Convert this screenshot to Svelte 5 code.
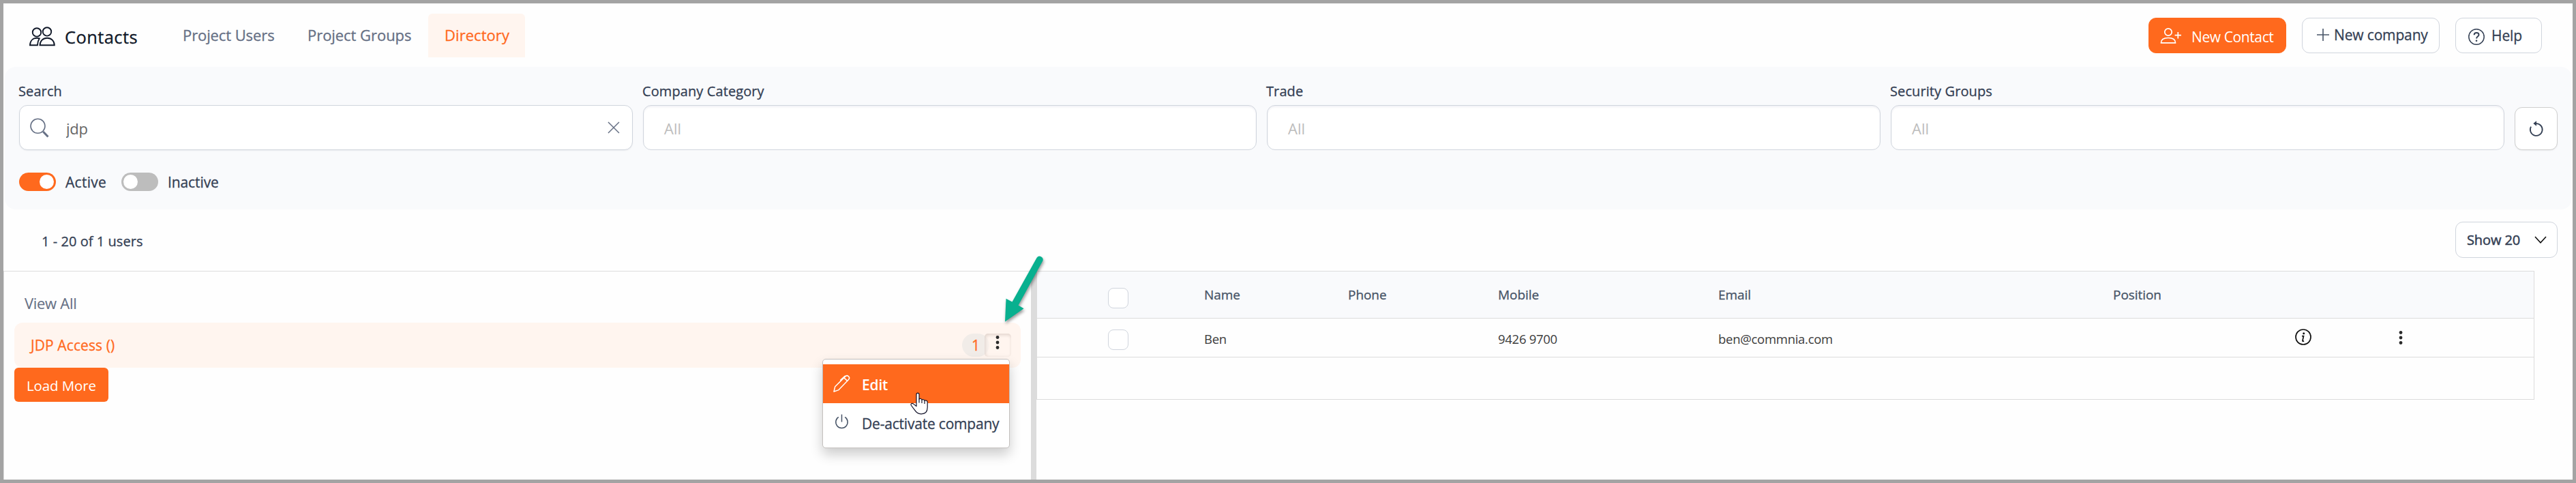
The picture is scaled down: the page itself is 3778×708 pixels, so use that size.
<script>
  const tabs = ['Project Users', 'Project Groups', 'Directory'];
  const filters = ['Company Category', 'Trade', 'Security Groups'];
  const columns = ['Name', 'Phone', 'Mobile', 'Email', 'Position'];
  const users = [{ name: 'Ben', phone: '', mobile: '9426 9700', email: 'ben@commnia.com', position: '' }];
  let activeTab = $state('Directory');
  let query = $state('jdp');
</script>

{#snippet dots()}
  <svg class="dots" width="6" height="22" viewBox="0 0 6 22" fill="#2b2b2b">
    <circle cx="3" cy="3.5" r="2.4" /><circle cx="3" cy="11" r="2.4" /><circle cx="3" cy="18.5" r="2.4" />
  </svg>
{/snippet}

<div class="page">
  <header>
    <svg class="people" width="38" height="30" viewBox="0 0 38 30" fill="none" stroke="#101828" stroke-width="1.9">
      <circle cx="11" cy="8.4" r="6.2" /><circle cx="26" cy="7.4" r="6.2" />
      <path d="M14.800 17.300c-1.200-.3-2.400-.5-3.600-.5-6 0-10 4-10.200 10.400h10.900c.3-3.900 1.300-7.400 2.900-9.900z" />
      <path d="M15.500 27.200c.3-6.300 4.500-10.400 10.700-10.400s10.400 4.100 10.600 10.400z" />
    </svg>
    <h1>Contacts</h1>
    <nav>
      {#each tabs as tab}
        <button class="tab" class:on={tab === activeTab} onclick={() => (activeTab = tab)}>{tab}</button>
      {/each}
    </nav>
    <div class="actions">
      <button class="btn primary">
        <svg width="32" height="26" viewBox="0 0 32 26" fill="none" stroke="#fff" stroke-width="1.7">
          <circle cx="12" cy="7" r="5.200" /><path d="M1.400 22.900c0-5 4.200-7.400 10.600-7.400s10.600 2.400 10.600 7.400z" stroke-linejoin="round" /><path d="M26.300 7v9.400M21.600 11.700H31" />
        </svg>
        <span>New Contact</span>
      </button>
      <button class="btn company">
        <svg width="18" height="18" viewBox="0 0 18 18" stroke="#475467" stroke-width="1.600"><path d="M9 0v18M0 9h18" /></svg>
        <span>New company</span>
      </button>
      <button class="btn help">
        <svg width="24" height="24" viewBox="0 0 24 24" fill="none" stroke="#344054" stroke-width="1.500">
          <circle cx="12" cy="12" r="11.200" /><path d="M8.600 9.200c.1-2 1.500-3.200 3.500-3.200s3.400 1.200 3.400 2.900c0 2.700-3.400 2.700-3.400 5.600" stroke-width="2" /><circle cx="12" cy="17.800" r="1.300" fill="#344054" stroke="none" />
        </svg>
        <span>Help</span>
      </button>
    </div>
  </header>

  <section class="filters">
    <div class="fields">
      <div class="field">
        <label for="search">Search</label>
        <div class="box search">
          <svg width="28" height="29" viewBox="0 0 28 29" fill="none" stroke="#667085"><circle cx="11.500" cy="11.800" r="10.500" stroke-width="1.600" /><path d="M19.300 20l7.200 7.500" stroke-width="3" /></svg>
          <input id="search" bind:value={query} />
          <svg width="18" height="18" viewBox="0 0 18 18" stroke="#667085" stroke-width="1.500"><path d="M1 1l16 16M17 1L1 17" /></svg>
        </div>
      </div>
      {#each filters as name}
        <div class="field">
          <span class="label">{name}</span>
          <div class="box select">All</div>
        </div>
      {/each}
      <button class="reset" aria-label="Reset">
        <svg width="20" height="23" viewBox="0 0 20 23" fill="none" stroke="#344054" stroke-width="1.800"><path d="M2 8.600A8.900 8.900 0 1 0 10 4.100" /><path d="M10 .2v7.600L5.300 4z" fill="#344054" stroke="none" /></svg>
      </button>
    </div>
    <div class="toggles">
      <span class="switch on"></span><span class="tl">Active</span>
      <span class="switch"></span><span class="tl second">Inactive</span>
    </div>
  </section>

  <div class="toolbar">
    <span class="count">1 - 20 of 1 users</span>
    <button class="show"><span>Show 20</span>
      <svg width="18" height="11" viewBox="0 0 18 11" fill="none" stroke="#101010" stroke-width="1.600"><path d="M1 1l8 8.700L17 1" /></svg>
    </button>
  </div>

  <div class="body">
    <aside>
      <div class="viewall">View All</div>
      <div class="company-row">
        <span class="cname">JDP Access ()</span>
        <span class="badge">1</span>
        <button class="more" aria-label="More">{@render dots()}</button>
        <div class="menu">
          <div class="item edit">
            <svg width="25" height="25" viewBox="0 0 25 25" fill="none" stroke="#fff" stroke-width="1.500" stroke-linejoin="round"><path d="M1 24l1.700-7.200L18 1.600c1.300-1.200 3.200-1 4.500.2s1.300 3.200.2 4.400L8 21.600z" /><path d="M15.700 3.600l5.300 5M10.300 7.600L16 2.200c.7-.7 1.500-1 2.500-.8" /></svg>
            <span>Edit</span>
          </div>
          <div class="item">
            <svg width="25" height="25" viewBox="0 0 25 25" fill="none" stroke="#475467" stroke-width="1.500"><path d="M12.500 0.500v11M7.800 4.400a8.700 8.700 0 1 0 9.400 0" /></svg>
            <span>De-activate company</span>
          </div>
        </div>
      </div>
      <button class="load">Load More</button>
    </aside>
    <div class="splitter"></div>
    <div class="table">
      <div class="row head">
        <i class="check"></i>
        {#each columns as c}<span>{c}</span>{/each}
      </div>
      {#each users as u}
        <div class="row">
          <i class="check"></i>
          <span>{u.name}</span><span>{u.phone}</span><span>{u.mobile}</span><span>{u.email}</span><span>{u.position}</span>
          <svg class="info" width="24" height="24" viewBox="0 0 24 24" fill="none" stroke="#111" stroke-width="1.700"><circle cx="12" cy="12" r="11" /><circle cx="12.700" cy="6.700" r="1.500" fill="#111" stroke="none" /><path d="M10 10.600h2.500l-1.500 6.700c-.2 1 .6 1.300 2 .4" /></svg>
          {@render dots()}
        </div>
      {/each}
      <div class="row blank"></div>
    </div>
  </div>

  <svg class="cursor" width="28" height="34" viewBox="0 0 28 34" fill="#fff" stroke="#14142b" stroke-width="1.200" stroke-linejoin="round">
    <path d="M9 20.500V3.200C9 .3 13 .3 13 3.200V10c1.200-1 3.600-.6 4 1 1.400-.8 3.500-.3 4 1.200 1.900-.7 4.200.2 4.200 2.300v7.500c0 6-3 9.800-9.200 9.800-5 0-7.500-2.600-9.800-6.200L1.200 19c-.9-1.800 1-3.200 2.800-2.400z" />
    <path d="M13 9.500v6M17 11v5M21 12.200V17" fill="none" />
  </svg>
  <svg class="arrow" width="70" height="110" viewBox="0 0 70 110" fill="#08b08f">
    <path d="M50.600 7.800a5 5 0 0 1 8.800 4.500L23.500 77.400l8 4.800L4 101.500 5.500 67.800l9 4.700z" />
  </svg>
</div>

<style>
  :global(body) { background: #fefefe; }
  .page, .page * { box-sizing: border-box; }
  .page { position: relative; width: 3778px; height: 708px; border: 5px solid #a3a3a3; background: #fefefe; font-family: "Open Sans", "Noto Sans", sans-serif; font-weight: 500; -webkit-text-stroke: .3px currentColor; color: #344054; display: flex; flex-direction: column; white-space: nowrap; overflow: hidden; }
  svg { display: block; flex: none; overflow: visible; }
  button { font: inherit; color: inherit; border: 0; background: none; padding: 0; margin: 0; }
  header { height: 93px; flex: none; display: flex; align-items: center; padding: 0 45px 0 38px; }
  header > .people { margin-top: 4px; }
  h1 { margin: 4px 0 0 14px; font-size: 25.500px; font-weight: 500; line-height: 30px; letter-spacing: .4px; color: #101828; width: 148px; }
  nav { display: flex; }
  .tab { height: 64px; padding: 0 25px; font-size: 22px; line-height: 63px; color: #667085; letter-spacing: -.1px; border-radius: 6px 6px 0 0; width: 184px; text-align: left; }
  .tab:nth-child(2) { width: 201px; padding-left: 24px; letter-spacing: -.05px; }
  .tab.on { background: #fff5ef; color: #ff691d; width: 142px; padding: 0 0 0 1px; text-align: center; letter-spacing: .05px; }
  .actions { margin-left: auto; display: flex; gap: 23px; }
  .btn { height: 52px; width: 202px; border: 1px solid #d0d5dd; border-radius: 11px; background: #fff; display: flex; align-items: center; font-size: 21px; line-height: 30px; }
  .primary { background: #ff691d; border-color: #ff691d; color: #fff; padding-left: 16px; gap: 14px; letter-spacing: -.4px; -webkit-text-stroke: 0; }
  .primary span { margin-top: 4px; }
  .primary svg { margin-top: 3px; }
  .company { padding-left: 21px; gap: 7px; letter-spacing: -.15px; }
  .company span { margin-top: -2px; }
  .company svg { margin-top: -2px; }
  .help { width: 127px; padding-left: 18px; gap: 10px; letter-spacing: -.1px; }
  .help svg { margin-top: 4px; }

  .filters { height: 209px; flex: none; margin: 0 1px 0 2px; border-radius: 16px; background: #f9fafc; padding: 24px 0 0 21px; }
  .fields { display: flex; gap: 15px; align-items: flex-end; }
  .field { width: 900px; display: flex; flex-direction: column; gap: 8px; }
  .field label, .label { font-size: 20px; line-height: 24px; letter-spacing: .1px; margin-left: -1px; }
  .box { height: 66px; border: 1px solid #d0d5dd; border-radius: 12px; background: #fff; display: flex; align-items: center; font-size: 22px; font-weight: 400; -webkit-text-stroke: 0; }
  .search { padding: 0 18px 0 15px; box-shadow: 0 1px 2px rgba(16, 24, 40, .06); }
  .search input { flex: 1; border: 0; outline: 0; background: none; font: inherit; color: #666; padding: 2px 0 0 25px; height: 42px; letter-spacing: -.3px; }
  .select { padding-left: 30px; padding-top: 1px; color: #bdbdbd; box-shadow: inset 0 2px 3px rgba(16, 24, 80, .06); }
  .reset { width: 63px; height: 63px; border: 1px solid #cfcfcf; border-radius: 11px; background: #fff; display: flex; align-items: center; justify-content: center; box-shadow: 0 1px 2px rgba(0, 0, 0, .06); }
  .toggles { display: flex; align-items: center; margin-top: 33px; height: 27px; font-size: 21px; line-height: 27px; }
  .switch { width: 54px; height: 27px; border-radius: 14px; background: #bdbdbd; padding: 3px; display: flex; }
  .switch::after { content: ""; width: 21px; height: 21px; border-radius: 50%; background: #fff; }
  .switch.on { background: #ff691d; justify-content: flex-end; }
  .tl { width: 82px; margin: 2px 0 0 14px; letter-spacing: .3px; }
  .second { letter-spacing: -.1px; }

  .toolbar { height: 90px; flex: none; display: flex; align-items: center; justify-content: space-between; padding: 0 22px 0 56px; }
  .count { font-size: 20px; line-height: 28px; margin-top: 3px; letter-spacing: .05px; }
  .show { width: 150px; height: 53px; margin-top: -1px; border: 1px solid #d0d5dd; border-radius: 11px; background: #fff; display: flex; align-items: center; justify-content: space-between; padding: 0 15px 0 16px; font-size: 20px; letter-spacing: -.1px; -webkit-text-stroke: .5px currentColor; }

  .body { flex: 1; display: flex; margin-right: 56px; border-top: 1px solid #dcdcdc; }
  aside { width: 1507px; border-left: 1px solid #dcdcdc; padding: 22px 15px 0 15px; }
  .viewall { height: 53px; line-height: 48px; padding-left: 15px; font-size: 22px; color: #667085; letter-spacing: -.3px; -webkit-text-stroke: .1px currentColor; }
  .company-row { position: relative; height: 66px; border-radius: 12px; background: #fff5ef; display: flex; align-items: center; padding: 0 14px 0 24px; color: #ff691d; font-size: 21px; }
  .cname { flex: 1; margin-top: -1px; letter-spacing: .1px; }
  .badge { width: 40px; height: 34px; border-radius: 17px; background: #f1ece8; font-size: 21px; line-height: 34px; text-align: center; margin-right: -7px; }
  .more { width: 39px; height: 34px; border-radius: 5px; background: rgba(255, 245, 239, .6); box-shadow: inset 1px 2px 5px rgba(60, 30, 20, .16); display: flex; justify-content: center; padding: 2px 2px 0 0; }
  .menu { position: absolute; left: 1185px; top: 53px; width: 275px; height: 131px; background: #fff; border: 1px solid #c4c0be; border-radius: 5px; padding-top: 7px; box-shadow: 0 9px 18px rgba(0, 0, 0, .2); color: #344054; z-index: 2; }
  .item { height: 57px; display: flex; align-items: center; gap: 17px; padding-left: 15px; letter-spacing: -.2px; }
  .item span { margin-top: 3px; }
  .edit { background: #ff691d; color: #fff; font-weight: 600; -webkit-text-stroke: 0; }
  .load { width: 138px; height: 50px; background: #ff691d; color: #fff; border-radius: 6px; font-size: 20.500px; line-height: 52px; letter-spacing: -.1px; -webkit-text-stroke: 0; }
  .splitter { width: 8px; background: #dcdcdc; }
  .table { flex: 1; height: 188px; border: solid #dcdcdc; border-width: 0 1px 1px 1px; }
  .row { height: 57px; padding-left: 104px; display: grid; grid-template-columns: 141px 211px 220px 323px 579px 267px 152px auto; align-items: center; font-size: 18.500px; font-weight: 400; letter-spacing: -.28px; color: #3c3c3c; border-bottom: 1px solid #dcdcdc; -webkit-text-stroke: 0; }
  .row span { margin-top: 2px; }
  .info { margin-top: -2px; }
  .head { height: 69px; background: #f9fafc; font-size: 19px; font-weight: 500; color: #475467; letter-spacing: -.05px; -webkit-text-stroke: .3px currentColor; }
  .head span { margin-top: 0; }
  .blank { border: 0; }
  .check { width: 30px; height: 30px; border: 1.500px solid #d0d5dd; border-radius: 8px; background: #fff; margin-top: 6px; }
  .head .check { margin-top: 10px; }
  .cursor { position: absolute; left: 1330px; top: 570px; z-index: 3; }
  .arrow { position: absolute; left: 1465px; top: 365px; z-index: 3; filter: drop-shadow(1px 3px 2px rgba(0, 0, 0, .4)); }
</style>
